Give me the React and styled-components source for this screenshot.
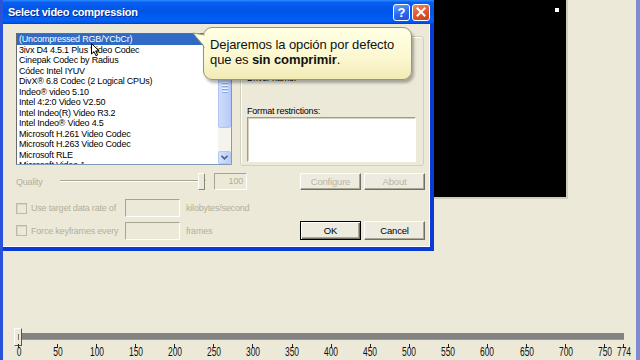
import React from 'react';
import styled, { createGlobalStyle } from 'styled-components';

const GlobalStyle = createGlobalStyle`
  html, body { margin: 0; padding: 0; background: #ECE9D8; overflow: hidden; }
  #root { width: 640px; height: 360px; }
`;

const Screen = styled.div`
  width: 640px;
  height: 360px;
  box-sizing: border-box;
  border-left: 3px solid #2853DA;
  border-right: 4px solid #7E8BD3;
  background: #ECE9D8;
  display: flex;
  flex-direction: column;
  font-family: 'Liberation Sans', Arial, sans-serif;
  overflow: hidden;
`;

const TopRow = styled.div`
  display: flex;
  align-items: flex-start;
`;

const Dialog = styled.div`
  position: relative;
  width: 431px;
  height: 251px;
  display: flex;
  flex-direction: column;
  flex-shrink: 0;
  z-index: 2;
`;

const TitleBar = styled.div`
  height: 24px;
  display: flex;
  align-items: center;
  padding: 0 4px 0 5px;
  background: linear-gradient(180deg, #2A8CFF 0%, #0A5EEF 10%, #0054E6 45%, #0060F8 85%, #0052E8 94%, #003DD2 100%);
`;

const TitleText = styled.div`
  flex: 1;
  color: #fff;
  font-weight: bold;
  font-size: 11px;
  letter-spacing: -0.25px;
  text-shadow: 1px 1px 0 #0A2A8C;
`;

const TitleButton = styled.div`
  width: ${p => p.w}px;
  height: 17px;
  margin-left: 2px;
  box-sizing: border-box;
  border: 1px solid #fff;
  border-radius: 3px;
  display: flex;
  align-items: center;
  justify-content: center;
  color: #fff;
  font-weight: bold;
  font-size: 13px;
  background: ${p => p.close
    ? 'linear-gradient(160deg, #F08A62 0%, #E2582F 50%, #C7401A 100%)'
    : 'linear-gradient(160deg, #6EA2FF 0%, #2E6CF0 50%, #1E4FD6 100%)'};
`;

const Body = styled.div`
  flex: 1;
  display: flex;
  flex-direction: column;
  box-sizing: border-box;
  padding: 9px 5px 0 13px;
  background: #ECE9D8;
  border-right: 4px solid #0B3BD6;
  border-bottom: 4px solid #0B3BD6;
  box-shadow: inset -1px -1px 0 #fff;
  font-size: 9px;
  letter-spacing: -0.2px;
  color: #000;
`;

const TopSection = styled.div`
  display: flex;
  gap: 8px;
  height: 133px;
`;

const ListBox = styled.div`
  width: 216px;
  height: 132px;
  box-sizing: border-box;
  border: 1px solid #7F9DB9;
  border-left-color: #6B6B6B;
  border-top-color: #6B6B6B;
  background: #fff;
  display: flex;
`;

const Items = styled.div`
  flex: 1;
  overflow: hidden;
`;

const Item = styled.div`
  height: 10.5px;
  line-height: 10.5px;
  padding-left: 2px;
  white-space: nowrap;
  background: ${p => (p.selected ? '#316AC5' : 'transparent')};
  color: ${p => (p.selected ? '#fff' : '#000')};
`;

const ScrollBar = styled.div`
  width: 13px;
  display: flex;
  flex-direction: column;
  background: #F4F3EE;
`;

const ScrollButton = styled.div`
  height: 13px;
  box-sizing: border-box;
  border: 1px solid #B4C8F4;
  border-radius: 2px;
  background: linear-gradient(90deg, #D6E1FD, #BCCEF8);
  display: flex;
  align-items: center;
  justify-content: center;
`;

const ScrollThumb = styled.div`
  height: 81px;
  box-sizing: border-box;
  border: 1px solid #B0C5F3;
  border-radius: 2px;
  background: linear-gradient(90deg, #CEDCFD, #B9CCF8);
  display: flex;
  flex-direction: column;
  align-items: center;
  justify-content: center;
  gap: 1px;
`;

const Grip = styled.div`
  width: 6px;
  height: 1px;
  background: #EEF3FF;
  border-bottom: 1px solid #8CA6E4;
`;

const ScrollTrack = styled.div`
  flex: 1;
`;

const GroupBox = styled.div`
  margin-top: 3px;
  width: 184px;
  height: 130px;
  box-sizing: border-box;
  border: 1px solid #D0D0BF;
  border-radius: 3px;
  box-shadow: inset 1px 1px 0 #fff;
  padding: 0 6px;
  display: flex;
  flex-direction: column;
`;

const FieldLabel = styled.div`
  margin-top: ${p => p.mt}px;
  height: 10px;
  line-height: 10px;
  white-space: nowrap;
`;

const FormatBox = styled.div`
  margin-top: 1px;
  width: 169px;
  height: 45px;
  box-sizing: border-box;
  background: #fff;
  border: 1px solid #A09C8C;
  border-right-color: #fff;
  border-bottom-color: #fff;
  box-shadow: inset 1px 1px 0 #D6D3C6;
`;

const Row = styled.div`
  display: flex;
  align-items: center;
  margin-top: ${p => p.mt}px;
  height: ${p => p.h}px;
`;

const Disabled = styled.span`
  color: #B3AF9C;
  white-space: nowrap;
  width: ${p => (p.w ? `${p.w}px` : 'auto')};
  margin-left: ${p => p.ml || 0}px;
  flex-shrink: 0;
`;

const QualitySlider = styled.div`
  width: 146px;
  height: 17px;
  display: flex;
  align-items: center;
  justify-content: flex-end;
  background: linear-gradient(#0000 7px, #A9A595 7px, #A9A595 8px, #fff 8px, #fff 9px, #0000 9px);
  padding-right: 1px;
  box-sizing: border-box;
`;

const SliderThumb = styled.div`
  width: 7px;
  height: 17px;
  box-sizing: border-box;
  background: #ECE9D8;
  border: 1px solid #fff;
  border-right-color: #8C8978;
  border-bottom-color: #8C8978;
`;

const EditBox = styled.div`
  width: ${p => p.w}px;
  height: ${p => p.h}px;
  margin-left: ${p => p.ml || 0}px;
  box-sizing: border-box;
  border: 1px solid #A7A493;
  border-right-color: #fff;
  border-bottom-color: #fff;
  background: #ECE9D8;
  color: #B3AF9C;
  text-align: right;
  padding-right: 3px;
  line-height: ${p => p.h - 2}px;
  flex-shrink: 0;
`;

const Button = styled.div`
  width: ${p => p.w}px;
  height: ${p => p.h}px;
  margin-left: ${p => (p.auto ? 'auto' : `${p.ml || 0}px`)};
  box-sizing: border-box;
  display: flex;
  align-items: center;
  justify-content: center;
  background: #EDEAE0;
  color: ${p => (p.disabled ? '#B8B4A2' : '#000')};
  border: 1px solid ${p => (p.primary ? '#000' : '#fff')};
  ${p => (p.primary
    ? 'box-shadow: inset 1px 1px 0 #fff, inset -1px -1px 0 #716F64, inset -2px -2px 0 #ACA899;'
    : 'border-right-color: #716F64; border-bottom-color: #716F64; box-shadow: inset -1px -1px 0 #ACA899;')}
  font-size: 9.5px;
  flex-shrink: 0;
`;

const CheckBox = styled.div`
  width: 11px;
  height: 11px;
  box-sizing: border-box;
  border: 1px solid #BDB9A8;
  background: #ECE9D8;
  box-shadow: inset 1px 1px 0 #D9D6C8;
  flex-shrink: 0;
`;

const Balloon = styled.div`
  position: absolute;
  left: 200px;
  top: 27px;
  width: 209px;
  height: 53px;
  box-sizing: border-box;
  padding: 9px 0 0 6px;
  border: 1px solid #9A9672;
  border-radius: 9px;
  background: linear-gradient(180deg, #FFFFE4 0%, #FBF7CF 60%, #F1EBB6 100%);
  box-shadow: 2px 3px 3px rgba(0, 0, 0, 0.3);
  font-size: 13px;
  line-height: 15px;
  letter-spacing: -0.1px;
  color: #111;
  white-space: nowrap;
`;

const BalloonTail = styled.svg`
  position: absolute;
  left: 189px;
  top: 30px;
`;

const Cursor = styled.svg`
  position: absolute;
  left: 88px;
  top: 43px;
`;

const Preview = styled.div`
  width: 134px;
  height: 199px;
  box-sizing: border-box;
  background: #000;
  border-right: 2px solid #CFCBC0;
  border-bottom: 2px solid #CFCBC0;
  display: flex;
  justify-content: flex-end;
  align-items: flex-start;
  padding: 8px 7px 0 0;
  flex-shrink: 0;
`;

const PreviewDot = styled.div`
  width: 4px;
  height: 4px;
  background: #fff;
`;

const Timeline = styled.div`
  margin-top: auto;
  padding: 0 12px 0 14px;
  display: flex;
  flex-direction: column;
`;

const TrackArea = styled.div`
  position: relative;
  height: 17px;
`;

const Track = styled.div`
  margin-top: 6px;
  height: 7px;
  background: #838383;
  border-bottom: 1px solid #9A9A9A;
  box-sizing: border-box;
`;

const TrackThumb = styled.div`
  position: absolute;
  left: -3px;
  top: 1px;
  width: 8px;
  height: 18px;
  box-sizing: border-box;
  background: #ECE9D8;
  border: 1px solid #fff;
  border-right-color: #555;
  border-bottom-color: #555;
  display: flex;
  justify-content: center;
  padding-top: 5px;
  &::after {
    content: '';
    width: 1px;
    height: 6px;
    background: #777;
  }
`;

const Scale = styled.div`
  position: relative;
  height: 16px;
`;

const Tick = styled.div`
  position: absolute;
  top: 0;
  width: 1px;
  height: 4px;
  background: #222;
`;

const TickLabel = styled.div`
  position: absolute;
  top: 1px;
  width: 40px;
  margin-left: -20px;
  text-align: center;
  font-size: 13px;
  line-height: 13px;
  color: #111;
  transform: scaleX(0.65);
`;

const codecs = [
  '(Uncompressed RGB/YCbCr)',
  '3ivx D4 4.5.1 Plus Video Codec',
  'Cinepak Codec by Radius',
  'Códec Intel IYUV',
  'DivX® 6.8 Codec (2 Logical CPUs)',
  'Indeo® video 5.10',
  'Intel 4:2:0 Video V2.50',
  'Intel Indeo(R) Video R3.2',
  'Intel Indeo® Video 4.5',
  'Microsoft H.261 Video Codec',
  'Microsoft H.263 Video Codec',
  'Microsoft RLE',
  'Microsoft Video 1',
];

const ticks = [0, 50, 100, 150, 200, 250, 300, 350, 400, 450, 500, 550, 600, 650, 700, 750, 774];

export default function App() {
  return (
    <>
      <GlobalStyle />
      <Screen>
        <TopRow>
          <Dialog>
            <TitleBar>
              <TitleText>Select video compression</TitleText>
              <TitleButton w={17}>?</TitleButton>
              <TitleButton w={18} close>
                <svg width="10" height="10" viewBox="0 0 10 10">
                  <path d="M1.5 1.5 L8.5 8.5 M8.5 1.5 L1.5 8.5" stroke="#fff" strokeWidth="2" strokeLinecap="square" />
                </svg>
              </TitleButton>
            </TitleBar>
            <Body>
              <TopSection>
                <ListBox>
                  <Items>
                    {codecs.map((c, i) => (
                      <Item key={c} selected={i === 0}>{c}</Item>
                    ))}
                  </Items>
                  <ScrollBar>
                    <ScrollButton />
                    <ScrollThumb>
                      <Grip /><Grip /><Grip /><Grip />
                    </ScrollThumb>
                    <ScrollTrack />
                    <ScrollButton>
                      <svg width="7" height="5" viewBox="0 0 7 5">
                        <path d="M0.5 0.8 L3.5 3.8 L6.5 0.8" stroke="#4D6185" strokeWidth="1.6" fill="none" />
                      </svg>
                    </ScrollButton>
                  </ScrollBar>
                </ListBox>
                <GroupBox>
                  <FieldLabel mt={36}>Driver name:</FieldLabel>
                  <FieldLabel mt={23}>Format restrictions:</FieldLabel>
                  <FormatBox />
                </GroupBox>
              </TopSection>

              <Row mt={7} h={17}>
                <Disabled w={44}>Quality</Disabled>
                <QualitySlider><SliderThumb /></QualitySlider>
                <EditBox w={33} h={17} ml={8}>100</EditBox>
                <Button w={61} h={17} auto disabled>Configure</Button>
                <Button w={61} h={17} ml={3} disabled>About</Button>
              </Row>

              <Row mt={9} h={18}>
                <CheckBox />
                <Disabled w={94} ml={4}>Use target data rate of</Disabled>
                <EditBox w={55} h={18} />
                <Disabled ml={6}>kilobytes/second</Disabled>
              </Row>

              <Row mt={4} h={19}>
                <CheckBox />
                <Disabled w={94} ml={4}>Force keyframes every</Disabled>
                <EditBox w={55} h={18} />
                <Disabled ml={6}>frames</Disabled>
                <Button w={61} h={19} auto primary>OK</Button>
                <Button w={61} h={19} ml={3}>Cancel</Button>
              </Row>
            </Body>

            <Cursor width="9" height="14" viewBox="0 0 9 14">
              <path d="M0.5 0.5 L0.5 11 L3 8.6 L5 12.8 L6.6 12 L4.7 7.9 L8 7.9 Z" fill="#fff" stroke="#000" strokeWidth="1" />
            </Cursor>

            <Balloon>
              <div>Dejaremos la opción por defecto</div>
              <div>que es <b>sin comprimir</b>.</div>
            </Balloon>
            <BalloonTail width="14" height="22" viewBox="0 0 14 22">
              <polygon points="1,3 14,4.5 14,18" fill="#FFFFE2" />
              <polyline points="12.5,5 1,3 12.5,17.5" fill="none" stroke="#9A9672" strokeWidth="1" />
            </BalloonTail>
          </Dialog>

          <Preview>
            <PreviewDot />
          </Preview>
        </TopRow>

        <Timeline>
          <TrackArea>
            <Track />
            <TrackThumb />
          </TrackArea>
          <Scale>
            {ticks.map(v => {
              const x = 1 + (v * 605) / 774;
              return (
                <React.Fragment key={v}>
                  <Tick style={{ left: `${x}px` }} />
                  <TickLabel style={{ left: `${x + 0.5}px` }}>{v}</TickLabel>
                </React.Fragment>
              );
            })}
          </Scale>
        </Timeline>
      </Screen>
    </>
  );
}
